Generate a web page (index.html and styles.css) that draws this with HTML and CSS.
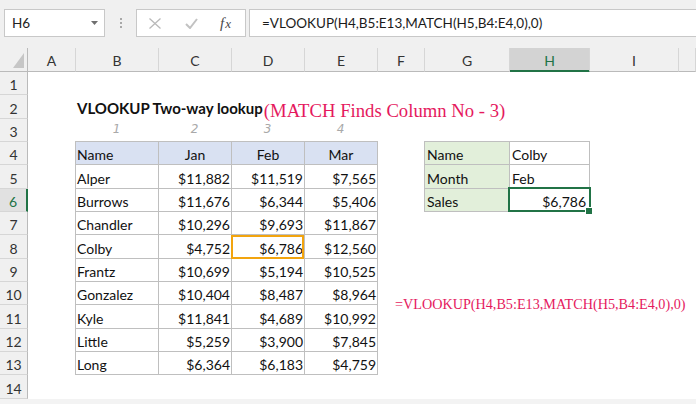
FILE: index.html
```html
<!DOCTYPE html>
<html>
<head>
<meta charset="utf-8">
<title>VLOOKUP Two-way lookup</title>
<link rel="stylesheet" href="styles.css">
</head>
<body>
<div class="app">
  <div class="toolbar">
    <div class="namebox">
      <span>H6</span>
      <svg class="dd" viewBox="0 0 7 4"><path d="M0 0H7L3.5 4Z" fill="#6f6f6f"/></svg>
    </div>
    <div class="grip"><i></i><i></i><i></i></div>
    <div class="fxbox">
      <svg class="ic-x" viewBox="0 0 12 11"><path d="M0.5 0.5L11.5 10.5M11.5 0.5L0.5 10.5" stroke="#b9b9b9" stroke-width="1.3" fill="none"/></svg>
      <svg class="ic-ok" viewBox="0 0 13 11"><path d="M1 6L5 10L12 1" stroke="#c2c2c2" stroke-width="2" fill="none"/></svg>
      <span class="fx"><i>f</i><i class="fx-x">x</i></span>
    </div>
    <div class="formula">=VLOOKUP(H4,B5:E13,MATCH(H5,B4:E4,0),0)</div>
  </div>

  <div class="sheet">
    <div class="corner"></div>
    <div class="colheads">
      <div class="ch">A</div>
      <div class="ch">B</div>
      <div class="ch">C</div>
      <div class="ch">D</div>
      <div class="ch">E</div>
      <div class="ch">F</div>
      <div class="ch">G</div>
      <div class="ch sel">H</div>
      <div class="ch">I</div>
      <div class="ch"></div>
    </div>
    <div class="rowheads">
      <div class="rh">1</div>
      <div class="rh">2</div>
      <div class="rh">3</div>
      <div class="rh">4</div>
      <div class="rh">5</div>
      <div class="rh sel">6</div>
      <div class="rh">7</div>
      <div class="rh">8</div>
      <div class="rh">9</div>
      <div class="rh">10</div>
      <div class="rh">11</div>
      <div class="rh">12</div>
      <div class="rh">13</div>
      <div class="rh">14</div>
    </div>
    <div class="cells">
      <div class="title">VLOOKUP Two-way lookup<span class="title-note">(MATCH Finds Column No - 3)</span></div>
      <div class="idx"><span>1</span><span>2</span><span>3</span><span>4</span></div>

      <div class="data">
        <div class="d h">Name</div><div class="d h c">Jan</div><div class="d h c">Feb</div><div class="d h c">Mar</div>
        <div class="d">Alper</div><div class="d n">$11,882</div><div class="d n">$11,519</div><div class="d n">$7,565</div>
        <div class="d">Burrows</div><div class="d n">$11,676</div><div class="d n">$6,344</div><div class="d n">$5,406</div>
        <div class="d">Chandler</div><div class="d n">$10,296</div><div class="d n">$9,693</div><div class="d n">$11,867</div>
        <div class="d">Colby</div><div class="d n">$4,752</div><div class="d n hl">$6,786</div><div class="d n">$12,560</div>
        <div class="d">Frantz</div><div class="d n">$10,699</div><div class="d n">$5,194</div><div class="d n">$10,525</div>
        <div class="d">Gonzalez</div><div class="d n">$10,404</div><div class="d n">$8,487</div><div class="d n">$8,964</div>
        <div class="d">Kyle</div><div class="d n">$11,841</div><div class="d n">$4,689</div><div class="d n">$10,992</div>
        <div class="d">Little</div><div class="d n">$5,259</div><div class="d n">$3,900</div><div class="d n">$7,845</div>
        <div class="d">Long</div><div class="d n">$6,364</div><div class="d n">$6,183</div><div class="d n">$4,759</div>
      </div>

      <div class="panel">
        <div class="d g">Name</div><div class="d v">Colby</div>
        <div class="d g">Month</div><div class="d v">Feb</div>
        <div class="d g">Sales</div><div class="d v n active">$6,786</div>
      </div>

      <div class="note">=VLOOKUP(H4,B5:E13,MATCH(H5,B4:E4,0),0)</div>
    </div>
  </div>
  <div class="tabs"></div>
</div>
</body>
</html>
```

FILE: styles.css
```css
* {
  box-sizing: border-box;
  margin: 0;
  padding: 0;
}

html, body {
  width: 696px;
  height: 404px;
  overflow: hidden;
  background: #ffffff;
}

body {
  font-family: Lato, "Open Sans", sans-serif;
  font-size: 14px;
  color: #1b1b1b;
}

.app {
  display: flex;
  flex-direction: column;
  height: 404px;
}

/* ---------- formula bar ---------- */
.toolbar {
  height: 48px;
  flex: none;
  background: #f0f0f0;
  display: flex;
  align-items: flex-start;
  padding: 9px 0 0 4px;
}

.namebox {
  width: 101px;
  height: 28px;
  flex: none;
  background: #fff;
  border: 1px solid #c8c8c8;
  display: flex;
  align-items: center;
  justify-content: space-between;
  padding: 0 6px 0 7px;
  font-size: 13.5px;
  color: #222;
}

.dd {
  width: 7px;
  height: 4px;
}

.grip {
  width: 31px;
  height: 28px;
  flex: none;
  display: flex;
  flex-direction: column;
  align-items: center;
  justify-content: center;
  gap: 2px;
}

.grip i {
  display: block;
  width: 2px;
  height: 2px;
  background: #a8a8a8;
}

.fxbox {
  width: 110px;
  height: 28px;
  flex: none;
  background: #fff;
  border: 1px solid #c8c8c8;
  display: flex;
  align-items: center;
  padding-left: 12px;
}

.ic-x {
  width: 12px;
  height: 11px;
}

.ic-ok {
  width: 13px;
  height: 11px;
  margin-left: 24px;
}

.fx {
  margin-left: 22px;
  font-family: "Liberation Serif", serif;
  font-size: 15px;
  color: #4a4a4a;
  display: flex;
  align-items: baseline;
}

.fx i {
  font-style: italic;
}

.fx-x {
  font-size: 13px;
  margin-left: 1px;
}

.formula {
  flex: 1;
  height: 28px;
  margin-left: 3px;
  margin-right: -4px;
  background: #fff;
  border: 1px solid #c8c8c8;
  display: flex;
  align-items: center;
  padding-left: 12px;
  font-size: 13.5px;
  color: #1b1b1b;
  white-space: nowrap;
}

/* ---------- sheet ---------- */
.sheet {
  flex: none;
  display: grid;
  grid-template-columns: 28px 1fr;
  grid-template-rows: 24px 327px;
}

.corner {
  background: #f0f0f0;
  border-right: 1px solid #bababa;
  border-bottom: 1px solid #bababa;
  display: flex;
  align-items: flex-end;
  justify-content: flex-end;
  padding: 0 3px 3px 0;
}

.corner::after {
  content: "";
  width: 0;
  height: 0;
  border-left: 11px solid transparent;
  border-bottom: 15px solid #c6c6c6;
}

.colheads {
  display: grid;
  grid-template-columns: 48px 83px 73px 73px 73px 47px 85px 80px 89px 1fr;
  background: #f0f0f0;
}

.ch {
  border-right: 1px solid #d6d6d6;
  border-bottom: 1px solid #bababa;
  display: flex;
  align-items: center;
  justify-content: center;
  color: #333;
  padding-top: 1px;
}

.ch.sel {
  background: #d3d3d3;
  color: #217346;
  border-bottom-color: #217346;
  box-shadow: inset 0 -1px 0 #217346;
}

.rowheads {
  display: grid;
  grid-template-rows: 23px 24px 23px 23px 24px 23px 23px 24px 23px 23px 24px 23px 23px 24px;
  background: #f0f0f0;
}

.rh {
  border-right: 1px solid #bababa;
  border-bottom: 1px solid #d6d6d6;
  display: flex;
  align-items: flex-end;
  justify-content: center;
  line-height: 17px;
  padding-bottom: 1px;
  color: #333;
}

.rh.sel {
  background: #e1e1e1;
  color: #217346;
  border-right: 2px solid #217346;
}

.cells {
  position: relative;
  display: grid;
  grid-template-columns: 47px 83px 73px 73px 73px 47px 85px 80px 89px 1fr;
  grid-template-rows: 23px 24px 23px 23px 24px 23px 23px 24px 23px 23px 24px 23px 23px 24px;
}

.title {
  grid-row: 2;
  grid-column: 2 / 9;
  display: flex;
  align-items: flex-end;
  padding: 0 0 2px 2px;
  font-weight: 700;
  font-size: 15px;
  line-height: 17px;
  white-space: nowrap;
  color: #111;
}

.title-note {
  font-family: "Liberation Serif", serif;
  font-weight: 400;
  font-size: 18.7px;
  color: #e5195e;
  margin-left: 1px;
  position: relative;
  top: 2px;
}

.idx {
  grid-row: 3;
  grid-column: 2 / 6;
  display: grid;
  grid-template-columns: 83px 73px 73px 73px;
  align-items: center;
  justify-items: center;
  font-family: "DejaVu Sans", sans-serif;
  font-weight: 200;
  font-style: italic;
  font-size: 12px;
  color: #a9a9a9;
  padding-bottom: 4px;
}

.data {
  grid-row: 4 / 14;
  grid-column: 2 / 6;
  margin-top: -1px;
  margin-right: -1px;
  display: grid;
  grid-template-columns: 83px 73px 73px 73px;
  grid-template-rows: 23px 24px 23px 23px 24px 23px 23px 24px 23px 23px;
  border-left: 1px solid #bfbfbf;
  border-top: 1px solid #bfbfbf;
}

.panel {
  grid-row: 4 / 7;
  grid-column: 7 / 9;
  margin-top: -1px;
  margin-right: -1px;
  display: grid;
  grid-template-columns: 85px 80px;
  grid-template-rows: 23px 24px 23px;
  border-left: 1px solid #bfbfbf;
  border-top: 1px solid #bfbfbf;
}

.d {
  border-right: 1px solid #bfbfbf;
  border-bottom: 1px solid #bfbfbf;
  display: flex;
  align-items: flex-end;
  padding: 0 1px 1px 1px;
  line-height: 17px;
  white-space: nowrap;
  color: #111;
}

.d.h {
  background: #d9e1f2;
}

.d.c {
  justify-content: center;
}

.d.n {
  justify-content: flex-end;
}

.d.g {
  background: #e2efda;
  padding-left: 2px;
}

.d.v {
  padding-left: 2px;
}

.d.v.n {
  padding-right: 3px;
}

.hl {
  position: relative;
}

.hl::after {
  content: "";
  position: absolute;
  left: -1px;
  top: 0;
  right: 0;
  bottom: -1px;
  border: 2px solid #f2a40e;
}

.active {
  position: relative;
}

.active::after {
  content: "";
  position: absolute;
  left: -2px;
  top: -2px;
  right: -2px;
  bottom: -1px;
  border: 2px solid #217346;
}

.active::before {
  content: "";
  position: absolute;
  right: -4px;
  bottom: -4px;
  width: 6px;
  height: 6px;
  background: #217346;
  border: 1px solid #fff;
  z-index: 1;
}

.note {
  position: absolute;
  left: 367px;
  top: 224px;
  font-family: "Liberation Serif", serif;
  font-size: 14.2px;
  line-height: 16px;
  color: #e5195e;
  white-space: nowrap;
}

.tabs {
  flex: 1;
  background: #f3f3f3;
}
```
